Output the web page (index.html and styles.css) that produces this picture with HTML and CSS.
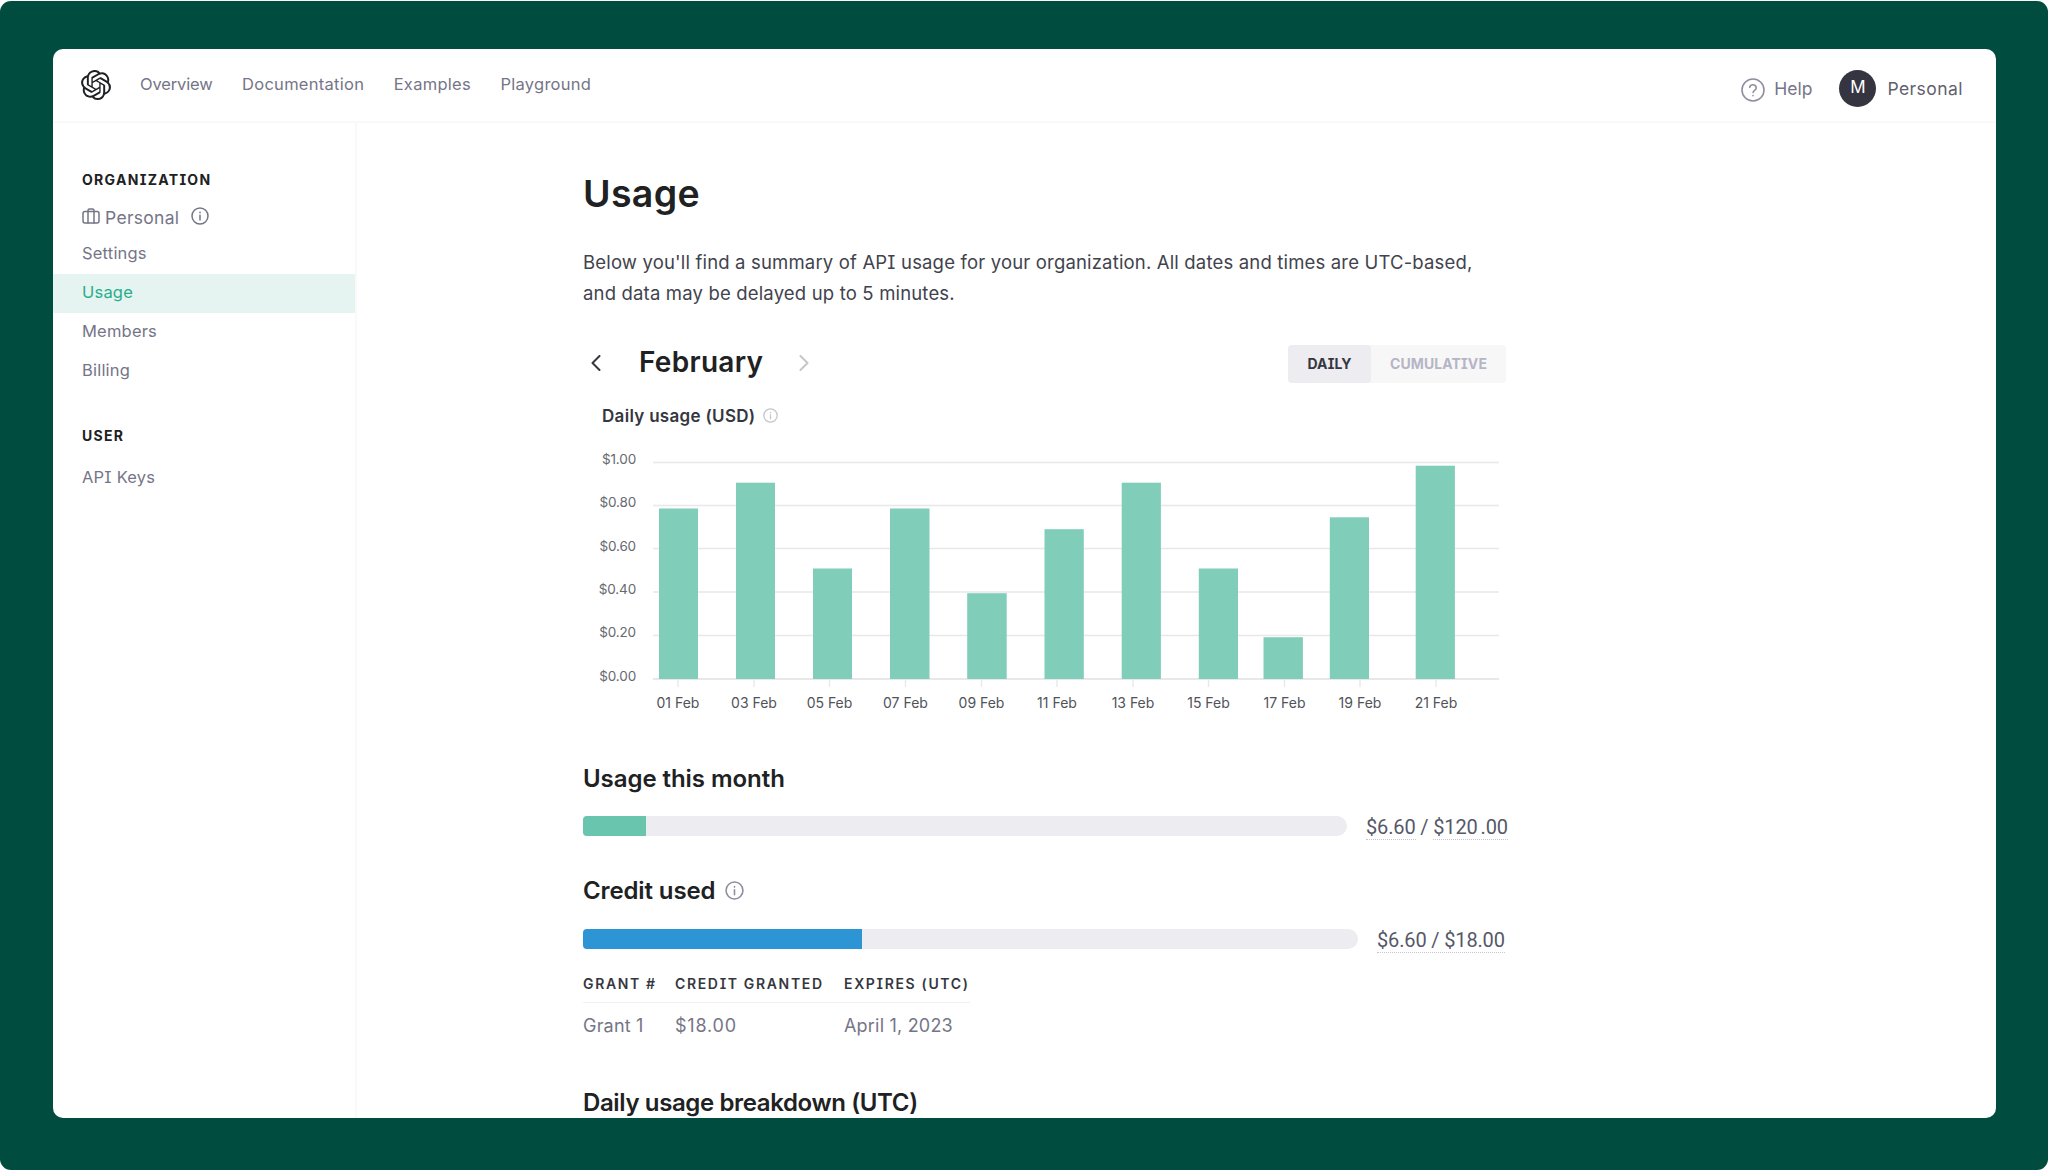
FILE: index.html
```html
<!DOCTYPE html>
<html lang="en">
<head>
    <meta charset="UTF-8">
    <meta name="viewport" content="width=device-width, initial-scale=1.0">
    <title>Usage</title>
    <link rel="stylesheet" href="styles.css">
</head>
<body>
    <div class="backdrop">
        <div class="window">
            <header class="header">
                <svg class="logo" viewBox="0 0 24 24"><path d="M22.2819 9.8211a5.9847 5.9847 0 0 0-.5157-4.9108 6.0462 6.0462 0 0 0-6.5098-2.9A6.0651 6.0651 0 0 0 4.9807 4.1818a5.9847 5.9847 0 0 0-3.9977 2.9 6.0462 6.0462 0 0 0 .7427 7.0966 5.98 5.98 0 0 0 .511 4.9107 6.051 6.051 0 0 0 6.5146 2.9001A5.9847 5.9847 0 0 0 13.2599 24a6.0557 6.0557 0 0 0 5.7718-4.2058 5.9894 5.9894 0 0 0 3.9977-2.9001 6.0557 6.0557 0 0 0-.7475-7.0729zm-9.022 12.6081a4.4755 4.4755 0 0 1-2.8764-1.0408l.1419-.0804 4.7783-2.7582a.7948.7948 0 0 0 .3927-.6813v-6.7369l2.02 1.1686a.071.071 0 0 1 .038.052v5.5826a4.504 4.504 0 0 1-4.4945 4.4944zm-9.6607-4.1254a4.4708 4.4708 0 0 1-.5346-3.0137l.142.0852 4.783 2.7582a.7712.7712 0 0 0 .7806 0l5.8428-3.3685v2.3324a.0804.0804 0 0 1-.0332.0615L9.74 19.9502a4.4992 4.4992 0 0 1-6.1408-1.6464zM2.3408 7.8956a4.485 4.485 0 0 1 2.3655-1.9728V11.6a.7664.7664 0 0 0 .3879.6765l5.8144 3.3543-2.0201 1.1685a.0757.0757 0 0 1-.071 0l-4.8303-2.7865A4.504 4.504 0 0 1 2.3408 7.872zm16.5963 3.8558L13.1038 8.364 15.1192 7.2a.0757.0757 0 0 1 .071 0l4.8303 2.7913a4.4944 4.4944 0 0 1-.6765 8.1042v-5.6772a.79.79 0 0 0-.407-.667zm2.0107-3.0231l-.142-.0852-4.7735-2.7818a.7759.7759 0 0 0-.7854 0L9.409 9.2297V6.8974a.0662.0662 0 0 1 .0284-.0615l4.8303-2.7866a4.4992 4.4992 0 0 1 6.6802 4.66zM8.3065 12.863l-2.02-1.1638a.0804.0804 0 0 1-.038-.0567V6.0742a4.4992 4.4992 0 0 1 7.3757-3.4537l-.142.0805L8.704 5.459a.7948.7948 0 0 0-.3927.6813zm1.0976-2.3654l2.602-1.4998 2.6069 1.4998v2.9994l-2.5974 1.4997-2.6067-1.4997Z"/></svg>
                <nav class="nav">
                    <a>Overview</a>
                    <a>Documentation</a>
                    <a>Examples</a>
                    <a>Playground</a>
                </nav>
                <div class="account">
                    <svg class="help-icon" viewBox="0 0 24 24"><circle cx="12" cy="12" r="11"/><path d="M8.700 9.300a3.300 3.300 0 0 1 6.500.8c0 2.100-3.100 2.500-3.100 4.400"/><path d="M12 17.600v.2"/></svg>
                    <span class="help">Help</span>
                    <span class="avatar">M</span>
                    <span class="account-name">Personal</span>
                </div>
            </header>
            <div class="body">
                <aside class="sidebar">
                    <div class="side-heading">ORGANIZATION</div>
                    <div class="side-org">
                        <svg class="org-icon" viewBox="0 0 18 16"><rect x="1" y="3.500" width="16" height="11.500" rx="2"/><path d="M6 15V2.500A1.500 1.500 0 0 1 7.500 1h3A1.500 1.500 0 0 1 12 2.500V15"/></svg>
                        <span>Personal</span>
                        <svg class="info side-info" viewBox="0 0 18 18"><circle cx="9" cy="9" r="8"/><path d="M9 8.300V13M9 5.200v.6"/></svg>
                    </div>
                    <a class="side-link">Settings</a>
                    <a class="side-link active">Usage</a>
                    <a class="side-link">Members</a>
                    <a class="side-link">Billing</a>
                    <div class="side-heading user">USER</div>
                    <a class="side-link keys">API Keys</a>
                </aside>
                <main class="main">
                    <h1>Usage</h1>
                    <p class="intro">Below you'll find a summary of API usage for your organization. All dates and times are UTC-based,<br>and data may be delayed up to 5 minutes.</p>
                    <div class="month-row">
                        <svg class="chevron" viewBox="0 0 10 16"><path d="M8.500 1L1.500 8l7 7"/></svg>
                        <span class="month">February</span>
                        <svg class="chevron next" viewBox="0 0 10 16"><path d="M1.500 1l7 7-7 7"/></svg>
                        <div class="toggle">
                            <span class="selected">DAILY</span>
                            <span class="other">CUMULATIVE</span>
                        </div>
                    </div>
                    <div class="chart-title">
                        <span>Daily usage (USD)</span>
                        <svg class="info" viewBox="0 0 18 18"><circle cx="9" cy="9" r="8"/><path d="M9 8.300V13M9 5.200v.6"/></svg>
                    </div>
                    <svg class="chart" viewBox="0 0 923 290">
                        <g class="grid">
                            <path d="M70 32.500H916M70 75.500H916M70 118.500H916M70 162H916M70 205.500H916"/>
                            <path class="axis" d="M70 249H916"/>
                            <path d="M95 250v7M171 250v7M246.500 250v7M322.500 250v7M398.500 250v7M474 250v7M550 250v7M625.500 250v7M701.500 250v7M777 250v7M853 250v7"/>
                        </g>
                        <g class="bars">
                            <rect x="76" y="78.500" width="39" height="170.500"/>
                            <rect x="153" y="52.700" width="39" height="196.300"/>
                            <rect x="230" y="138.500" width="39" height="110.500"/>
                            <rect x="307" y="78.500" width="39.500" height="170.500"/>
                            <rect x="384.200" y="163.200" width="39.500" height="85.800"/>
                            <rect x="461.500" y="99.200" width="39.300" height="149.800"/>
                            <rect x="538.700" y="52.700" width="39.200" height="196.300"/>
                            <rect x="615.800" y="138.500" width="39.200" height="110.500"/>
                            <rect x="680.500" y="207.200" width="39.400" height="41.800"/>
                            <rect x="746.800" y="87.300" width="39.200" height="161.700"/>
                            <rect x="832.700" y="35.700" width="39.200" height="213.300"/>
                        </g>
                        <g class="y-labels">
                            <text x="53" y="34">$1.00</text>
                            <text x="53" y="77">$0.80</text>
                            <text x="53" y="120.500">$0.60</text>
                            <text x="53" y="164">$0.40</text>
                            <text x="53" y="207">$0.20</text>
                            <text x="53" y="250.500">$0.00</text>
                        </g>
                        <g class="x-labels">
                            <text x="95" y="278">01 Feb</text>
                            <text x="171" y="278">03 Feb</text>
                            <text x="246.500" y="278">05 Feb</text>
                            <text x="322.500" y="278">07 Feb</text>
                            <text x="398.500" y="278">09 Feb</text>
                            <text x="474" y="278">11 Feb</text>
                            <text x="550" y="278">13 Feb</text>
                            <text x="625.500" y="278">15 Feb</text>
                            <text x="701.500" y="278">17 Feb</text>
                            <text x="777" y="278">19 Feb</text>
                            <text x="853" y="278">21 Feb</text>
                        </g>
                    </svg>
                    <h2>Usage this month</h2>
                    <div class="meter">
                        <div class="track"><div class="fill green" style="width: 63px"></div></div>
                        <div class="amount month-amount"><span>$6.60</span> / <span>$120<i class="gap"></i>.00</span></div>
                    </div>
                    <h2 class="credit">Credit used <svg class="info" viewBox="0 0 18 18"><circle cx="9" cy="9" r="8"/><path d="M9 8.300V13M9 5.200v.6"/></svg></h2>
                    <div class="meter">
                        <div class="track"><div class="fill blue" style="width: 279px"></div></div>
                        <div class="amount credit-amount"><span>$6.60 / $18.00</span></div>
                    </div>
                    <table class="grants">
                        <tr><th class="col-grant">GRANT #</th><th class="col-credit">CREDIT GRANTED</th><th>EXPIRES (UTC)</th></tr>
                        <tr><td>Grant 1</td><td class="granted">$18.00</td><td>April 1, 2023</td></tr>
                    </table>
                    <h2 class="breakdown">Daily usage breakdown (UTC)</h2>
                </main>
            </div>
        </div>
    </div>
</body>
</html>
```
FILE: styles.css
```css
* {
    box-sizing: border-box;
}
body {
    margin: 0;
    background-color: #fff;
    font-family: Inter, "Liberation Sans", sans-serif;
    font-feature-settings: "cv08";
    color: #757587;
    white-space: nowrap;
    overflow: hidden;
}
svg {
    display: block;
    flex: none;
    fill: none;
    stroke: currentColor;
    stroke-linecap: round;
    stroke-linejoin: round;
}
.backdrop {
    height: 1169px;
    margin-top: 1px;
    padding: 48px 52px 51px 53px;
    background-color: #004d40;
    border-radius: 11px;
}
.window {
    height: 1069px;
    background-color: #fff;
    border-radius: 10px;
    overflow: hidden;
}

/* header */
.header {
    display: flex;
    height: 74px;
    padding: 0 33px 0 28px;
    border-bottom: 2px solid #f9f9fa;
}
.logo {
    width: 30px;
    height: 30px;
    margin-top: 21px;
    fill: #202123;
    stroke: none;
}
.nav {
    display: flex;
    gap: 29.5px;
    margin-left: 29px;
    font-size: 16.5px;
    line-height: 71px;
    letter-spacing: 0.27px;
}
.nav a:first-child {
    letter-spacing: -0.15px;
}
.account {
    display: flex;
    align-items: center;
    height: 78px;
    margin-left: auto;
    font-size: 17.5px;
}
.help-icon {
    width: 24px;
    height: 24px;
    margin: 4px 9px 0 0;
    color: #8e8ea0;
    stroke-width: 1.6;
}
.avatar {
    width: 37px;
    height: 37px;
    margin: 0 11px 0 27px;
    border-radius: 50%;
    background-color: #343541;
    color: #fff;
    font-size: 17px;
    line-height: 35px;
    text-align: center;
}
.account-name {
    letter-spacing: 0.45px;
    color: #5f616e;
}

/* sidebar */
.body {
    display: flex;
    height: 995px;
}
.sidebar {
    width: 304px;
    border-right: 2px solid #f9f9fa;
    padding-top: 46px;
}
.side-heading {
    padding-left: 29px;
    font-size: 14px;
    font-weight: 700;
    line-height: 21px;
    letter-spacing: 1.3px;
    color: #202123;
}
.side-org {
    display: flex;
    align-items: center;
    height: 24px;
    margin-top: 15px;
    padding-left: 29px;
    font-size: 17.5px;
    letter-spacing: 0.3px;
}
.org-icon {
    width: 18px;
    height: 16px;
    margin: 0 5px 2px 0;
    stroke-width: 1.5;
}
.info {
    stroke-width: 1.5;
}
.side-info {
    width: 18px;
    height: 18px;
    margin: 0 0 2px 12px;
}
.side-link {
    display: block;
    height: 39px;
    padding-left: 29px;
    font-size: 16.5px;
    line-height: 37px;
    letter-spacing: 0.2px;
}
.side-org + .side-link {
    margin-top: 6px;
}
.active {
    background-color: #e5f3f1;
    color: #29ad8b;
}
.user {
    margin-top: 34px;
}
.keys {
    margin-top: 13px;
}

/* content */
.main {
    width: 1149px;
    padding: 49px 0 0 226px;
}
h1 {
    margin: 0;
    font-size: 37.5px;
    font-weight: 600;
    line-height: 44px;
    letter-spacing: 0.3px;
    color: #202123;
}
.intro {
    margin: 31px 0 0;
    font-size: 18.5px;
    line-height: 31px;
    letter-spacing: 0.17px;
    color: #41434d;
}
.month-row {
    display: flex;
    align-items: center;
    height: 38px;
    margin-top: 36px;
    color: #353740;
}
.chevron {
    width: 10px;
    height: 16px;
    margin: 0 0 2px 8px;
    stroke-width: 2;
}
.month {
    margin-left: 38px;
    padding-bottom: 5px;
    font-size: 28px;
    font-weight: 600;
    letter-spacing: 0.3px;
    color: #202123;
}
.next {
    margin-left: 36px;
    color: #c5c5ca;
}
.toggle {
    display: flex;
    margin-left: auto;
    border-radius: 4px;
    background-color: #f7f7f8;
    font-size: 14px;
    font-weight: 700;
    line-height: 37px;
    height: 38px;
    letter-spacing: 0.1px;
    text-align: center;
}
.selected {
    width: 83px;
    border-radius: 4px;
    background-color: #ececf1;
}
.other {
    width: 135px;
    color: #b5b5c5;
}
.chart-title {
    display: flex;
    align-items: center;
    height: 24px;
    margin-top: 21px;
    padding-left: 19px;
    font-size: 17px;
    font-weight: 600;
    letter-spacing: 0.3px;
    color: #353740;
}
.chart-title .info {
    width: 15px;
    height: 15px;
    margin: 0 0 2px 8px;
    color: #c5c5ca;
}
.chart {
    width: 923px;
    height: 290px;
    margin-top: 2px;
}
.grid {
    stroke: #e8e8e8;
    stroke-width: 1.4;
    stroke-linecap: butt;
}
.axis {
    stroke-width: 2;
}
.bars {
    fill: #80ceb9;
    stroke: none;
}
.y-labels, .x-labels {
    fill: #666970;
    stroke: none;
    font-size: 14px;
}
.y-labels {
    font-size: 13.5px;
    letter-spacing: -0.15px;
    text-anchor: end;
}
.x-labels {
    text-anchor: middle;
    fill: #50535a;
}
h2 {
    display: flex;
    align-items: center;
    height: 30px;
    margin: 43px 0 0;
    font-size: 24px;
    font-weight: 600;
    letter-spacing: -0.06px;
    color: #202123;
}
h2.credit {
    margin-top: 39px;
    letter-spacing: -0.12px;
}
.credit .info {
    width: 19px;
    height: 19px;
    margin-left: 10px;
    color: #8e8ea0;
}
.meter {
    display: flex;
    height: 20px;
    margin-top: 23px;
}
.credit + .meter {
    margin-top: 24px;
}
.track {
    flex: 1;
    border-radius: 4px 10px 10px 4px;
    background-color: #ececf1;
    overflow: hidden;
}
.fill {
    height: 20px;
}
.green {
    background-color: #69c5ad;
}
.blue {
    background-color: #2d95d3;
}
.amount {
    margin-left: 19px;
    font-family: Roboto, "Liberation Sans", sans-serif;
    font-size: 20px;
    line-height: 22px;
    letter-spacing: -0.15px;
    color: #565869;
}
.amount span {
    display: inline-block;
    height: 24px;
    border-bottom: 1px dotted #c5c5d2;
}
.gap {
    display: inline-block;
    width: 3px;
}
.month-amount {
    width: 140px;
}
.credit-amount {
    width: 129px;
}
.grants {
    margin-top: 23px;
    border-collapse: collapse;
    table-layout: fixed;
    width: 387px;
}
.grants th {
    height: 30px;
    padding: 0 0 6px;
    border-bottom: 1px solid #f0f0f3;
    font-size: 14px;
    font-weight: 600;
    letter-spacing: 1.65px;
    text-align: left;
    color: #353740;
}
.grants td {
    height: 47px;
    padding: 0;
    font-size: 18px;
    letter-spacing: 0.2px;
}
.grants .granted {
    letter-spacing: 0.8px;
}
.col-grant {
    width: 92px;
}
.col-credit {
    width: 169px;
}
h2.breakdown {
    margin-top: 38px;
    letter-spacing: -0.37px;
}
```
